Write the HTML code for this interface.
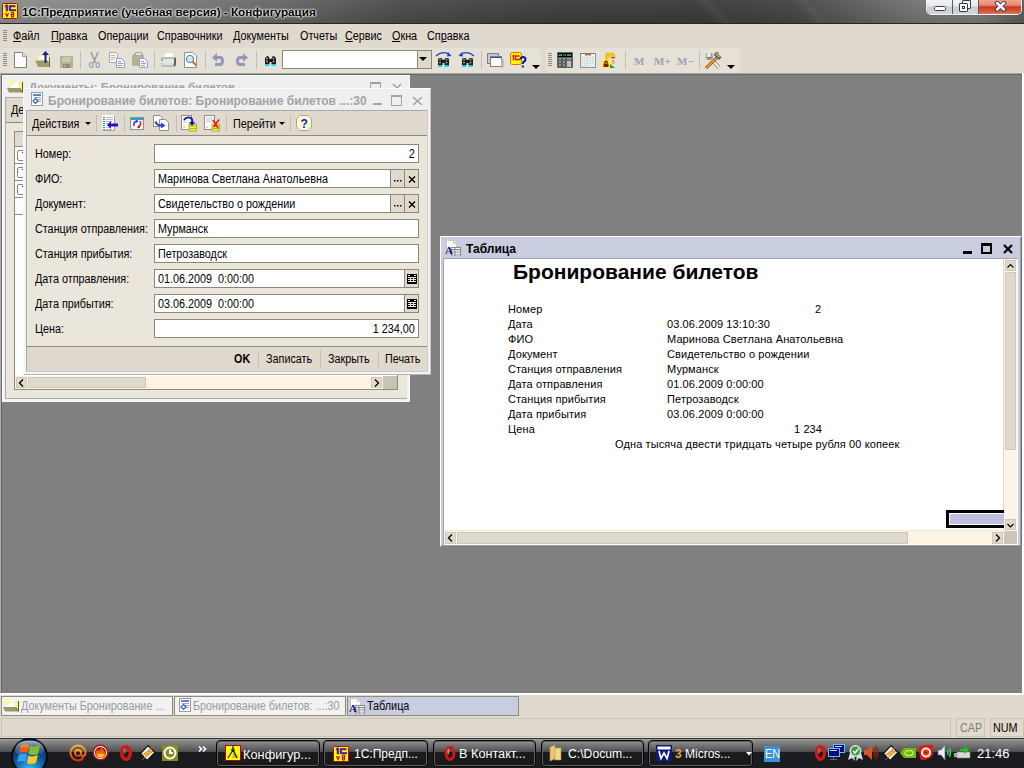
<!DOCTYPE html>
<html><head><meta charset="utf-8">
<style>
*{box-sizing:border-box;margin:0;padding:0}
html,body{width:1024px;height:768px;overflow:hidden}
body{position:relative;background:#808080;font-family:"Liberation Sans",sans-serif;font-size:11px;color:#000}
.a{position:absolute}
.t{position:absolute;white-space:nowrap;line-height:13px}
.r{position:absolute;white-space:nowrap;line-height:13px;font-size:11px;letter-spacing:.11px}
.u{position:absolute;white-space:nowrap;line-height:14px;font-size:12px;transform:scaleX(.9);transform-origin:0 0}
svg{position:absolute;overflow:visible}
#title{left:0;top:0;width:1024px;height:24px;background:linear-gradient(47.5deg,transparent 528px,rgba(255,255,255,.055) 535px,transparent 542px,transparent 600px,rgba(255,255,255,.045) 607px,transparent 614px),linear-gradient(rgba(255,255,255,.04),rgba(0,0,0,.1)),linear-gradient(90deg,#8e8e8e 0px,#858585 120px,#6c6c6c 260px,#4c4c4c 400px,#3e3e3e 560px,#3c3c3c 700px,#454545 790px,#606060 860px,#767676 920px,#7c7c7c 980px,#5c5c5c 1024px);border-bottom:1px solid #262626}
#menu{left:0;top:24px;width:1024px;height:49px;background:#e0d9ce}
#mdi{left:0;top:73px;width:1022px;height:620px;background:#808080;border-top:1px solid #a8a8a8;border-left:1px solid #b0b0b0;box-shadow:inset 1px 1px 0 #686868}
#tabs{left:0;top:694px;width:1024px;height:24px;background:#e0d9ce;border-top:1px solid #fff}
#status{left:0;top:718px;width:1024px;height:20px;background:#e0d9ce}
#task{left:0;top:738px;width:1024px;height:30px;background:linear-gradient(#777 0px,#555 2px,#454545 8px,#333 13px,#161616 14px,#1a1a1a 30px)}
.grip{position:absolute;width:4px;background:repeating-linear-gradient(#8f8b80 0 1px,transparent 1px 2px)}
.tb{position:absolute;top:48px;height:25px;background:#e5e1d7;border-radius:3px}
.sep{position:absolute;width:1px;background:#c4bfb3}
.field{position:absolute;background:#fff;border:1px solid #8c8878;height:19px}
.btn3{position:absolute;background:#e0d9ce;border:1px solid #8c8878;height:19px;width:15px}
</style></head><body>
<!-- TITLE BAR -->
<div id="title" class="a"></div>
<svg style="left:2px;top:3px" width="16" height="16"><rect x="0.5" y="0.5" width="15" height="15" rx="1" fill="#ffff00" stroke="#c00000"/><path d="M3 3.5L4.5 2.5V8" stroke="#e00000" stroke-width="1.6" fill="none" transform="translate(0.6,0.4)"/><path d="M3 3.5L4.5 2.5V8" stroke="#1f2fe0" stroke-width="1.6" fill="none"/><path d="M13 3H7.5V7H13.5" stroke="#e00000" stroke-width="1.6" fill="none" transform="translate(0.6,0.4)"/><path d="M13 3H7.5V7H13.5" stroke="#1f2fe0" stroke-width="1.6" fill="none"/><path d="M3.5 10L5 13.5L6.5 10" stroke="#b00000" stroke-width="1.2" fill="none"/><circle cx="10.5" cy="10.3" r="1.3" fill="none" stroke="#b00000" stroke-width="1.1"/><circle cx="10.5" cy="12.8" r="1.3" fill="none" stroke="#b00000" stroke-width="1.1"/></svg>
<div class="t" style="left:22px;top:5px;font-weight:bold;font-size:11.7px;line-height:14px;color:#000;text-shadow:0 0 2px #fff,0 0 2px #fff,0 0 3px #eee">1С:Предприятие (учебная версия) - Конфигурация</div>
<!-- caption buttons -->
<div class="a" style="left:926px;top:-3px;width:96px;height:18px;border:1px solid #f2f2f2;border-top:none;border-radius:0 0 5px 5px;background:#5a5a5a;box-shadow:0 0 1px rgba(0,0,0,.4)"></div>
<div class="a" style="left:927px;top:-2px;width:25px;height:16px;background:linear-gradient(#f6f6f6,#e8e8e8 50%,#c8cad2 56%,#d4d6de);border-radius:0 0 0 4px"></div>
<div class="a" style="left:953px;top:-2px;width:25px;height:16px;background:linear-gradient(#f6f6f6,#e8e8e8 50%,#c8cad2 56%,#d4d6de)"></div>
<div class="a" style="left:979px;top:-2px;width:42px;height:16px;background:linear-gradient(#f0b0a0,#e88870 45%,#c83c20 56%,#d85a3a 85%,#e07a5a);border-radius:0 0 4px 0"></div>
<div class="a" style="left:934px;top:6px;width:12px;height:5px;border:1px solid #353a58;border-radius:1.5px;background:#fff"></div>
<div class="a" style="left:962px;top:0px;width:9px;height:9px;border:1px solid #353a58;border-radius:1px;background:#fff"></div>
<div class="a" style="left:959px;top:3px;width:9px;height:9px;border:1px solid #353a58;border-radius:1px;background:#fff"></div>
<div class="a" style="left:962px;top:6px;width:3px;height:3px;border:1px solid #353a58"></div>
<svg style="left:994px;top:1px" width="13" height="11"><path d="M3 2L10 8.5M10 2L3 8.5" stroke="#353a58" stroke-width="4.4" stroke-linecap="round"/><path d="M3 2L10 8.5M10 2L3 8.5" stroke="#fff" stroke-width="2.4" stroke-linecap="round"/></svg>
<!-- MENU -->
<div id="menu" class="a"></div>
<div class="grip" style="left:3px;top:30px;height:11px"></div>
<div class="u" style="left:13px;top:29px;"><u>Ф</u>айл</div>
<div class="u" style="left:51px;top:29px;"><u>П</u>равка</div>
<div class="u" style="left:98px;top:29px;">Операции</div>
<div class="u" style="left:157px;top:29px;">Справочники</div>
<div class="u" style="left:233px;top:29px;">Документы</div>
<div class="u" style="left:300px;top:29px;">Отчеты</div>
<div class="u" style="left:345px;top:29px;"><u>С</u>ервис</div>
<div class="u" style="left:392px;top:29px;"><u>О</u>кна</div>
<div class="u" style="left:427px;top:29px;">Сп<u>р</u>авка</div>

<!-- TOOLBARS -->
<div class="tb" style="left:0;width:541px"></div>
<div class="tb" style="left:546px;width:194px"></div>
<div class="grip" style="left:3px;top:53px;height:13px"></div>
<div class="grip" style="left:548px;top:53px;height:13px"></div>
<div id="tbicons">
<svg style="left:14px;top:52px" width="13" height="16"><path d="M0.5 0.5H8.5L12.5 4.5V15.5H0.5Z" fill="#fff" stroke="#808080"/><path d="M8.5 0.5V4.5H12.5" fill="#e0e0e0" stroke="#a0a0a0"/></svg>
<svg style="left:35px;top:51px" width="17" height="17"><path d="M2 6L5 3L9 7Z" fill="#fdf890"/><path d="M3 8L7 5H12V9Z" fill="#fff"/><path d="M12 6H15V16L13 14Z" fill="#f8f098"/><path d="M0 9H13L15 16H3Z" fill="#a09c6c"/><path d="M0 9H13" stroke="#f8f4c0"/><path d="M14.5 6V16" stroke="#6c6838"/><path d="M10.5 12V3" stroke="#1a1a8a" stroke-width="2"/><path d="M7 4L10.5 0L14 4Z" fill="#1a1a8a"/></svg>
<svg style="left:60px;top:56px" width="13" height="12"><rect x="0" y="0" width="13" height="12" fill="#b4b294"/><rect x="2" y="1" width="9" height="5" fill="#cac8ae"/><rect x="3" y="8" width="7" height="4" fill="#8e8c78"/><rect x="4" y="9" width="2" height="2" fill="#b4b294"/></svg>
<div class="sep" style="left:80px;top:51px;height:18px"></div>
<svg style="left:89px;top:52px" width="11" height="16"><path d="M2 0L6.5 11M9 0L4.5 11" stroke="#a0a0a0" stroke-width="1.6"/><ellipse cx="2.2" cy="13" rx="1.7" ry="2.5" fill="none" stroke="#9a9ec4" stroke-width="1.2"/><ellipse cx="8.8" cy="13" rx="1.7" ry="2.5" fill="none" stroke="#9a9ec4" stroke-width="1.2"/></svg>
<svg style="left:109px;top:52px" width="16" height="16"><path d="M0.5 0.5H6.5L8.5 2.5V10.5H0.5Z" fill="#f8f8f8" stroke="#a8a8a8"/><path d="M2 3.5H6M2 5.5H7M2 7.5H5" stroke="#b8b8b8"/><path d="M7.5 6.5H12.5L15.5 9.5V15.5H7.5Z" fill="#f4f4f8" stroke="#9a9ec4"/><path d="M9 9.5H12M9 11.5H14M9 13.5H13" stroke="#9a9ec4"/></svg>
<svg style="left:132px;top:52px" width="16" height="16"><rect x="0" y="2" width="12" height="12" rx="2" fill="#b4b294"/><rect x="3.5" y="0.5" width="6" height="3" fill="#e4e4e4" stroke="#a8a8a8"/><path d="M7.5 6.5H12.5L15.5 9.5V15.5H7.5Z" fill="#f4f4f8" stroke="#9a9ec4"/><path d="M9 9.5H12M9 11.5H14M9 13.5H13" stroke="#9a9ec4"/></svg>
<div class="sep" style="left:154px;top:51px;height:18px"></div>
<svg style="left:160px;top:53px" width="17" height="15"><path d="M5 0H14L12 5H3Z" fill="#fff" stroke="#ddd" stroke-width="0.6"/><path d="M1 6Q1 4 3 4H14L16 6V12L14 14H2L1 12Z" fill="#bcbcbc"/><path d="M1 6H14V10H1Z" fill="#e4e4e4"/><path d="M14 6L16 4V12L14 14Z" fill="#606060"/><path d="M2 11H13" stroke="#fff"/><circle cx="2" cy="7" r="0.9" fill="#20d020"/></svg>
<svg style="left:184px;top:52px" width="14" height="16"><path d="M0.5 0.5H9L12.5 4V15.5H0.5Z" fill="#fff" stroke="#909090"/><circle cx="6" cy="7" r="3.6" fill="#c8f0f8" stroke="#507888" stroke-width="1"/><path d="M8.5 9.5L12.5 13.5" stroke="#c87020" stroke-width="2"/></svg>
<div class="sep" style="left:205px;top:51px;height:18px"></div>
<svg style="left:212px;top:53px" width="13" height="14"><path d="M0 4.5L5 0V3H8Q12 3 12 8Q12 13 8 13H3V10H8Q9 10 9 8Q9 6 8 6H5V9Z" fill="#9498bc"/></svg>
<svg style="left:236px;top:53px" width="13" height="14"><path d="M12 4.5L7 0V3H4Q0 3 0 8Q0 13 4 13H9V10H4Q3 10 3 8Q3 6 4 6H7V9Z" fill="#9498bc"/></svg>
<div class="sep" style="left:256px;top:51px;height:18px"></div>
<svg style="left:265px;top:56px" width="12" height="10"><path d="M1 2Q1 0 2.5 0Q4 0 4 2V8H0V3ZM7 2Q7 0 8.5 0Q10 0 10 2V8H11V3Z" fill="#1a1a1a"/><rect x="0" y="1" width="4.5" height="8" rx="1.5" fill="#1a1a1a"/><rect x="6.5" y="1" width="4.5" height="8" rx="1.5" fill="#1a1a1a"/><rect x="4" y="3" width="3" height="3" fill="#1a1a1a"/><circle cx="2" cy="2.5" r="1" fill="#a0a0a0"/><circle cx="2" cy="5.5" r="1" fill="#a0a0a0"/><circle cx="8.5" cy="2.5" r="1" fill="#a0a0a0"/><circle cx="8.5" cy="5.5" r="1" fill="#a0a0a0"/><rect x="0" y="8" width="4" height="2" fill="#10d8e8"/><rect x="6.5" y="8" width="4" height="2" fill="#10d8e8"/></svg>
<svg style="left:435px;top:51px" width="18" height="16"><path d="M1 5Q8 -1 15 4" stroke="#2040c0" stroke-width="1.2" fill="none"/><path d="M13 1L16.5 5L12 5.5Z" fill="#2040c0"/><g transform="translate(3,6)"><rect x="0" y="1" width="4.5" height="8" rx="1.5" fill="#1a1a1a"/><rect x="6.5" y="1" width="4.5" height="8" rx="1.5" fill="#1a1a1a"/><rect x="4" y="3" width="3" height="3" fill="#1a1a1a"/><circle cx="2" cy="2.5" r="1" fill="#a0a0a0"/><circle cx="2" cy="5.5" r="1" fill="#a0a0a0"/><circle cx="8.5" cy="2.5" r="1" fill="#a0a0a0"/><circle cx="8.5" cy="5.5" r="1" fill="#a0a0a0"/><rect x="0" y="8" width="4" height="2" fill="#10d8e8"/><rect x="6.5" y="8" width="4" height="2" fill="#10d8e8"/></g></svg>
<svg style="left:458px;top:51px" width="18" height="16"><path d="M16 5Q9 -1 2 4" stroke="#2040c0" stroke-width="1.2" fill="none"/><path d="M4 1L0.5 5L5 5.5Z" fill="#2040c0"/><g transform="translate(4,6)"><rect x="0" y="1" width="4.5" height="8" rx="1.5" fill="#1a1a1a"/><rect x="6.5" y="1" width="4.5" height="8" rx="1.5" fill="#1a1a1a"/><rect x="4" y="3" width="3" height="3" fill="#1a1a1a"/><circle cx="2" cy="2.5" r="1" fill="#a0a0a0"/><circle cx="2" cy="5.5" r="1" fill="#a0a0a0"/><circle cx="8.5" cy="2.5" r="1" fill="#a0a0a0"/><circle cx="8.5" cy="5.5" r="1" fill="#a0a0a0"/><rect x="0" y="8" width="4" height="2" fill="#10d8e8"/><rect x="6.5" y="8" width="4" height="2" fill="#10d8e8"/></g></svg>
<div class="sep" style="left:481px;top:51px;height:18px"></div>
<svg style="left:487px;top:53px" width="17" height="15"><rect x="0.5" y="0.5" width="11" height="10" fill="#c8c8c8" stroke="#808080"/><rect x="3.5" y="3.5" width="11" height="10" fill="#fff" stroke="#808080"/><path d="M4 4.5H14" stroke="#3050c0" stroke-width="1.2"/><rect x="14" y="6" width="2.5" height="8.5" fill="#b0b0b0"/></svg>
<svg style="left:510px;top:52px" width="17" height="17"><rect x="0.5" y="0.5" width="11" height="12" rx="2" fill="#ffff00" stroke="#e07000"/><path d="M2.5 4.5L3.5 3.5V8.5M9.5 4H5.5V7.5H10" stroke="#f00000" stroke-width="1.3" fill="none"/><path d="M10.5 7.5Q10.5 5 13 5Q15.5 5 15.5 7.5Q15.5 9 13.5 10Q12.8 10.5 12.8 12" stroke="#0818a8" stroke-width="2" fill="none"/><rect x="11.8" y="13.5" width="2" height="2" fill="#0818a8"/></svg>
<svg style="left:532px;top:65px" width="8" height="4"><path d="M0 0H8L4 4Z" fill="#000"/></svg>
<svg style="left:557px;top:52px" width="16" height="16"><rect x="0" y="0" width="16" height="16" rx="1" fill="#606060"/><rect x="1" y="1" width="14" height="4" fill="#000"/><path d="M2 3H5M6 3H9M10 3H14" stroke="#20e040"/><path d="M2 2.5V4M4 2.5V4M11 2.5V4M13 2.5V4" stroke="#20e0e0"/><path d="M2 7H4M6 7H8M10 7H14M2 10H4M6 10H8M2 13H4M6 13H8" stroke="#a0a0a0" stroke-width="1.5"/><rect x="10" y="9" width="4" height="6" fill="#c0c0c0"/></svg>
<svg style="left:580px;top:52px" width="16" height="16"><rect x="0.5" y="1.5" width="15" height="14" fill="#fff" stroke="#909090"/><path d="M1 1.5H15" stroke="#606060" stroke-dasharray="1 1"/><path d="M5 3Q8 2 11 3" stroke="#e06020" stroke-width="1.5"/><rect x="1" y="4" width="14" height="11" fill="#d8f4fa"/><path d="M2 6H14M2 8.5H14M2 11H14M2 13.5H10" stroke="#f0a070" stroke-dasharray="1 1.5"/></svg>
<svg style="left:602px;top:52px" width="15" height="17"><path d="M5 3Q6 8 9 11Q12 12 13.5 10V5Q12 2 9 3Z" fill="#fbe0c8"/><path d="M10 7Q13 8 13 11Q11 12 9.5 11Z" fill="#f0a0a8"/><path d="M3 6Q2 1 7 0.5Q12 0 13.5 3Q14 6 12 6Q10 4 8 5Q6 8 5 9Z" fill="#f8c428"/><path d="M4 2L6 1M10 1L12 2" stroke="#a0c040" stroke-width="1"/><path d="M9 6Q11 5 13 6" stroke="#804020" stroke-width="1"/><path d="M8 12L13 16H8Z" fill="#10a040"/><rect x="0" y="8" width="8" height="8" fill="#ffff00"/><path d="M1.5 11.5H6.5V15H1.5Z" fill="#8a1030"/><path d="M2.8 11.5V10Q4 8.5 5.2 10V11.5" stroke="#8a1030" stroke-width="1.3" fill="none"/></svg>
<div class="sep" style="left:625px;top:51px;height:18px"></div>
<div class="t" style="left:634px;top:54px;font:bold 11px 'Liberation Serif';color:#9c9eb8;line-height:14px">M</div>
<div class="t" style="left:654px;top:54px;font:bold 11px 'Liberation Serif';color:#9c9eb8;line-height:14px">M+</div>
<div class="t" style="left:677px;top:54px;font:bold 11px 'Liberation Serif';color:#9c9eb8;line-height:14px">M−</div>
<div class="sep" style="left:699px;top:51px;height:18px"></div>
<svg style="left:705px;top:52px" width="17" height="17"><path d="M7.5 8.5L14 15.5" stroke="#707070" stroke-width="3.6"/><path d="M7.5 8.5L14 15.5" stroke="#f4f4f4" stroke-width="2.2"/><circle cx="4.2" cy="4.5" r="3.8" fill="#9a9a9a"/><circle cx="3.6" cy="4" r="2.2" fill="#e8e8e8"/><rect x="3" y="0" width="2.4" height="4" fill="#f0f0f0"/><path d="M2.5 5.5H5.5" stroke="#555" stroke-width="1"/><path d="M12 5.5L1 16" stroke="#7a2010" stroke-width="3"/><path d="M12 5.5L1 16" stroke="#e8a020" stroke-width="1.8"/><path d="M8.5 2.5L11 0L16.5 5.5L14 8Z" fill="#5a5a5a"/><path d="M10 2L11 1L15 5L14 6Z" fill="#b0b0b0"/><path d="M11 0.5L13 0L13.5 1.5" stroke="#e8a020" stroke-width="1"/></svg>
<svg style="left:727px;top:65px" width="8" height="4"><path d="M0 0H8L4 4Z" fill="#000"/></svg>

</div>
<!-- combo -->
<div class="a" style="left:282px;top:50px;width:150px;height:19px;background:#fff;border:1px solid #8c8878"></div>
<div class="a" style="left:417px;top:51px;width:14px;height:17px;background:#e0d9ce;border-left:1px solid #8c8878"></div>
<svg style="left:419px;top:57px" width="8" height="5"><path d="M0 0 H8 L4 4Z" fill="#000"/></svg>

<!-- MDI -->
<div id="mdi" class="a"></div>
<div class="a" style="left:1022px;top:73px;width:2px;height:621px;background:#fff"></div>

<!-- DOC LIST WINDOW -->
<div id="docwin">
<div class="a" style="left:2px;top:75px;width:408px;height:327px;background:#f2f2f2;border:1px solid #fff;border-right-color:#f6f6f6;border-bottom-color:#f6f6f6"></div>
<div class="a" style="left:5px;top:123px;width:402px;height:276px;background:#ebe6dc"></div>
<div class="a" style="left:3px;top:76px;width:406px;height:21px;background:#efefef"></div>
<svg style="left:7px;top:80px" width="17" height="14"><path d="M2 0H6L8 2L2 7Z" fill="#fdfc98"/><path d="M1 8L8 2H11L14 5V8Z" fill="#fff"/><path d="M1 8L8 2.5M11 2.5L13 4.5" stroke="#c8c8c8" stroke-width=".8" stroke-dasharray="1 1"/><path d="M11 2H15V12L13 9Z" fill="#f8f088"/><path d="M0 8H13L15 12.5H2Z" fill="#9c9868"/><path d="M15.5 2V12.5" stroke="#5a5830"/><path d="M13 8.5L15 12" stroke="#6a6838"/></svg>
<div class="t" style="left:29px;top:80px;font-weight:bold;font-size:11.5px;line-height:14px;color:#a3a3a3">Документы: Бронирование билетов</div>
<div class="a" style="left:370px;top:82px;width:11px;height:11px;border:1px solid #a3a3a3;border-top-width:2px"></div>
<svg style="left:392px;top:83px" width="10" height="10"><path d="M1 1L9 9M9 1L1 9" stroke="#a3a3a3" stroke-width="1.6"/></svg>
<div class="a" style="left:5px;top:97px;width:402px;height:26px;background:#e0d9ce;border-top:1px solid #a9a9a9;border-left:1px solid #a9a9a9;border-bottom:1px solid #8f8a7d"></div>
<div class="u" style="left:11px;top:103px">Действия</div>
<div class="a" style="left:5px;top:123px;width:402px;height:276px;border-left:1px solid #a9a9a9;border-bottom:1px solid #a9a9a9"></div>
<div class="a" style="left:14px;top:131px;width:384px;height:259px;background:#fff;border:1px solid #8f8a7d"></div>
<div class="a" style="left:15px;top:132px;width:383px;height:15px;background:#e0d9ce;border-bottom:1px solid #8f8a7d"></div>
<div class="a" style="left:15px;top:163px;width:383px;height:1px;background:#8f8a7d"></div>
<div class="a" style="left:15px;top:180px;width:383px;height:1px;background:#8f8a7d"></div>
<div class="a" style="left:15px;top:197px;width:383px;height:1px;background:#8f8a7d"></div>
<div class="a" style="left:15px;top:214px;width:383px;height:1px;background:#8f8a7d"></div>
<div class="a" style="left:17px;top:150px;width:8px;height:11px;border:1px solid #808080;border-radius:2px;background:#fff"></div>
<div class="a" style="left:22px;top:152px;width:1px;height:1px;background:#1030e0"></div>
<div class="a" style="left:17px;top:167px;width:8px;height:11px;border:1px solid #808080;border-radius:2px;background:#fff"></div>
<div class="a" style="left:22px;top:169px;width:1px;height:1px;background:#1030e0"></div>
<div class="a" style="left:17px;top:184px;width:8px;height:11px;border:1px solid #808080;border-radius:2px;background:#fff"></div>
<div class="a" style="left:22px;top:186px;width:1px;height:1px;background:#1030e0"></div>
<div class="a" style="left:15px;top:376px;width:382px;height:13px;background:#fcf3e4"></div>
<div class="a" style="left:16px;top:377px;width:11px;height:11px;background:#e0d9ce;border:1px solid #cfc8ba"></div>
<svg style="left:18px;top:379px" width="6" height="8"><path d="M5 0.5L1.5 4L5 7.5" fill="none" stroke="#000" stroke-width="1.3"/></svg>
<div class="a" style="left:28px;top:377px;width:118px;height:11px;background:#e0d9ce;border:1px solid #cfc8ba"></div>
<div class="a" style="left:371px;top:377px;width:11px;height:11px;background:#e0d9ce;border:1px solid #cfc8ba"></div>
<svg style="left:374px;top:379px" width="6" height="8"><path d="M1 0.5L4.5 4L1 7.5" fill="none" stroke="#000" stroke-width="1.3"/></svg>
<div class="a" style="left:383px;top:376px;width:14px;height:13px;background:#c9c3b6"></div>
</div>

<!-- FORM WINDOW -->
<div id="formwin">
<div class="a" style="left:23px;top:88px;width:408px;height:287px;background:#f4f4f4;border:1px solid #fbfbfb;border-right-color:#c8c8c8;border-bottom-color:#b4b4b4"></div>
<div class="a" style="left:24px;top:89px;width:406px;height:21px;background:#efefef"></div>
<svg style="left:31px;top:92px" width="12" height="14"><rect x="0.5" y="0.5" width="11" height="13" fill="#fff" stroke="#9a9a9a"/><path d="M2 3H10" stroke="#2f5fa5" stroke-width="1.5"/><path d="M3 5.5H10M6 7.5H10M7 9.5H10" stroke="#9aa0e0"/><path d="M4.5 6.5L7 9L4.5 11.5L2 9Z" fill="none" stroke="#3060b0" stroke-width="1.2"/></svg>
<div class="t" style="left:48px;top:94px;font-weight:bold;font-size:12px;line-height:14px;color:#a3a3a3">Бронирование билетов: Бронирование билетов ...:30</div>
<div class="a" style="left:373px;top:103px;width:9px;height:2px;background:#a3a3a3"></div>
<div class="a" style="left:391px;top:95px;width:11px;height:11px;border:1px solid #a3a3a3;border-top-width:2px"></div>
<svg style="left:412px;top:96px" width="11" height="10"><path d="M1 1L10 9M10 1L1 9" stroke="#a3a3a3" stroke-width="1.6"/></svg>
<div class="a" style="left:26px;top:110px;width:401px;height:26px;background:#e0d9ce;border-top:1px solid #a9a9a9;border-left:1px solid #a9a9a9;border-bottom:1px solid #8f8a7d"></div>
<div class="a" style="left:26px;top:136px;width:401px;height:210px;background:#ebe6dc;border-left:1px solid #a9a9a9"></div>
<div class="a" style="left:26px;top:346px;width:401px;height:25px;background:#e0d9ce;border-top:1px solid #8f8a7d;border-left:1px solid #a9a9a9"></div>

<div class="a" style="left:427px;top:110px;width:1px;height:262px;background:#cacaca"></div>
<div class="a" style="left:26px;top:371px;width:402px;height:1px;background:#cacaca"></div>
<div class="u" style="left:32px;top:117px">Действия</div>
<svg style="left:85px;top:122px" width="6" height="3"><path d="M0 0H6L3 3Z" fill="#000"/></svg>
<div class="u" style="left:233px;top:117px">Перейти</div>
<svg style="left:102px;top:115px" width="17" height="16"><rect x="1" y="1" width="12" height="15" fill="#a0a0a0"/><rect x="0" y="0" width="12" height="15" fill="#fff"/><path d="M1 2h2v1h-2zM1 4h2v1h-2zM1 6h2v1h-2zM1 8h2v1h-2zM1 10h2v1h-2zM1 12h2v1h-2zM1 14h2v1h-2z" fill="#2090e0"/><path d="M4 2.5H11M4 4.5H11M4 6.5H10M4 8.5H7M4 12.5H7M4 14.5H10" stroke="#c0c0c0"/><path d="M5 10L9 6V8.5H16V11.5H9V14Z" fill="#2a10c8"/></svg>
<svg style="left:130px;top:117px" width="15" height="13"><rect x="0.5" y="0.5" width="13" height="12" fill="#f4f4f4" stroke="#909090"/><rect x="1" y="1" width="13" height="2" fill="#3098d8"/><rect x="0" y="0" width="2" height="2" fill="#20e020"/><path d="M4 9Q3 5 7 4" stroke="#1030e0" stroke-width="1.4" fill="none"/><path d="M6 3L8.5 4L6.5 6Z" fill="#1030e0"/><path d="M10 4Q12 8 8 10" stroke="#e02020" stroke-width="1.4" fill="none"/><path d="M9 8.5L7 10.5L10 11Z" fill="#a00000"/></svg>
<svg style="left:153px;top:115px" width="16" height="16"><path d="M0.5 0.5H7L9 2.5V11.5H0.5Z" fill="#fff" stroke="#909090"/><path d="M6.5 4.5H12.5L15.5 7.5V15.5H6.5Z" fill="#fff" stroke="#909090"/><path d="M2.5 6.5Q4 11 9 10.5" stroke="#3040d0" stroke-width="2.2" fill="none"/><path d="M8 7.5L12.5 10.5L8 13.5Z" fill="#3040d0"/></svg>
<svg style="left:181px;top:115px" width="17" height="17"><rect x="0.5" y="0.5" width="10" height="14" fill="#fff" stroke="#909090"/><path d="M2 3H7M2 5H5M2 7H6" stroke="#c8c8c8"/><path d="M3 11L4 12.5H2Z" fill="#9090f0"/><path d="M8 9H15.5V16H8Z" fill="#f8f040" stroke="#a0a020" stroke-width="0.8"/><path d="M8.5 11H15M8.5 13.5H15" stroke="#a0a020" stroke-width="0.8"/><path d="M3 5Q6 1 10 3Q12 5 11 8" stroke="#0818a8" stroke-width="1.8" fill="none"/><path d="M8 7H14L11 11Z" fill="#0818a8"/></svg>
<svg style="left:204px;top:115px" width="17" height="17"><rect x="0.5" y="0.5" width="10" height="14" fill="#fff" stroke="#909090"/><path d="M2 3H9M2 5H9M2 7H9" stroke="#c8c8c8"/><path d="M3 11L4 12.5H2Z" fill="#9090f0"/><path d="M8 9H15.5V16H8Z" fill="#f8f040" stroke="#a0a020" stroke-width="0.8"/><path d="M8.5 11H15M8.5 13.5H15" stroke="#a0a020" stroke-width="0.8"/><path d="M9 5L14 13M15 4.5L9.5 12" stroke="#f01010" stroke-width="1.5"/></svg>
<svg style="left:296px;top:115px" width="16" height="16"><path d="M4 0.5H12L15.5 4V12L12 15.5H4L0.5 12V4Z" fill="#fdfbd0" stroke="#a8a8a0"/><text x="4.5" y="13" font-family="Liberation Sans" font-weight="bold" font-size="12" fill="#0818b8">?</text></svg>

<svg style="left:279px;top:122px" width="6" height="3"><path d="M0 0H6L3 3Z" fill="#000"/></svg>
<div class="sep" style="left:96px;top:115px;height:17px"></div>
<div class="sep" style="left:124px;top:115px;height:17px"></div>
<div class="sep" style="left:176px;top:115px;height:17px"></div>
<div class="sep" style="left:226px;top:115px;height:17px"></div>
<div class="sep" style="left:290px;top:115px;height:17px"></div>
<div class="u" style="left:35px;top:147px">Номер:</div>
<div class="field" style="left:154px;top:144px;width:265px"></div>
<div class="u" style="transform-origin:100% 0;right:609px;top:147px">2</div>
<div class="u" style="left:35px;top:172px">ФИО:</div>
<div class="field" style="left:154px;top:169px;width:237px"></div>
<div class="btn3" style="left:390px;top:169px"></div><div class="btn3" style="left:404px;top:169px"></div>
<div class="u" style="left:158px;top:172px">Маринова Светлана Анатольевна</div>
<svg style="left:394px;top:180px" width="8" height="2"><path d="M0 0h1.5v1.5h-1.5zM3 0h1.5v1.5h-1.5zM6 0h1.5v1.5h-1.5z" fill="#000"/></svg>
<svg style="left:408px;top:176px" width="8" height="7"><path d="M1 0.5L7 6.5M7 0.5L1 6.5" stroke="#000" stroke-width="1.4"/></svg>
<div class="u" style="left:35px;top:197px">Документ:</div>
<div class="field" style="left:154px;top:194px;width:237px"></div>
<div class="btn3" style="left:390px;top:194px"></div><div class="btn3" style="left:404px;top:194px"></div>
<div class="u" style="left:158px;top:197px">Свидетельство о рождении</div>
<svg style="left:394px;top:205px" width="8" height="2"><path d="M0 0h1.5v1.5h-1.5zM3 0h1.5v1.5h-1.5zM6 0h1.5v1.5h-1.5z" fill="#000"/></svg>
<svg style="left:408px;top:201px" width="8" height="7"><path d="M1 0.5L7 6.5M7 0.5L1 6.5" stroke="#000" stroke-width="1.4"/></svg>
<div class="u" style="left:35px;top:222px">Станция отправления:</div>
<div class="field" style="left:154px;top:219px;width:265px"></div>
<div class="u" style="left:158px;top:222px">Мурманск</div>
<div class="u" style="left:35px;top:247px">Станция прибытия:</div>
<div class="field" style="left:154px;top:244px;width:265px"></div>
<div class="u" style="left:158px;top:247px">Петрозаводск</div>
<div class="u" style="left:35px;top:272px">Дата отправления:</div>
<div class="field" style="left:154px;top:269px;width:251px"></div>
<div class="btn3" style="left:404px;top:269px"></div>
<div class="u" style="left:158px;top:272px">01.06.2009&nbsp; 0:00:00</div>
<svg style="left:407px;top:274px" width="10" height="10"><rect x="0" y="0" width="10" height="10" fill="#000"/><path d="M1 1h2v1h-2zM7 1h2v1h-2zM1 3h8v1h-8zM1 5h8v1h-8zM1 7h8v1h-8zM3 4h1v4h-1zM6 4h1v4h-1z" fill="#ece6da"/></svg>
<div class="u" style="left:35px;top:297px">Дата прибытия:</div>
<div class="field" style="left:154px;top:294px;width:251px"></div>
<div class="btn3" style="left:404px;top:294px"></div>
<div class="u" style="left:158px;top:297px">03.06.2009&nbsp; 0:00:00</div>
<svg style="left:407px;top:299px" width="10" height="10"><rect x="0" y="0" width="10" height="10" fill="#000"/><path d="M1 1h2v1h-2zM7 1h2v1h-2zM1 3h8v1h-8zM1 5h8v1h-8zM1 7h8v1h-8zM3 4h1v4h-1zM6 4h1v4h-1z" fill="#ece6da"/></svg>
<div class="u" style="left:35px;top:322px">Цена:</div>
<div class="field" style="left:154px;top:319px;width:265px"></div>
<div class="u" style="transform-origin:100% 0;right:609px;top:322px">1 234,00</div>
<div class="u" style="left:234px;top:352px;font-weight:bold">OK</div>
<div class="u" style="left:266px;top:352px">Записать</div>
<div class="u" style="left:328px;top:352px">Закрыть</div>
<div class="u" style="left:385px;top:352px">Печать</div>
<div class="sep" style="left:258px;top:350px;height:17px"></div>
<div class="sep" style="left:320px;top:350px;height:17px"></div>
<div class="sep" style="left:378px;top:350px;height:17px"></div>
</div>

<!-- REPORT WINDOW -->
<div id="repwin">
<div class="a" style="left:440px;top:236px;width:582px;height:311px;background:#c8cde0;border-top:1px solid #fff;border-left:1px solid #fff;border-right:1px solid #6c6e7a;border-bottom:1px solid #7a7c88;box-shadow:inset -1px -1px 0 #9a9eb0"></div>
<svg style="left:445px;top:240px" width="17" height="17"><path d="M1.5 0.5H8.5L11.5 3.5V12H1.5Z" fill="#fff" stroke="#c8c8c8"/><path d="M8.5 0.5V3.5H11.5" fill="#e8e8e8" stroke="#c8c8c8"/><rect x="6" y="7" width="10" height="9" fill="#8a8a8a"/><path d="M7 8.5H9.5M10.5 8.5H15M7 10.8H9.5M10.5 10.8H15M7 13.1H9.5M10.5 13.1H15M7 15H9.5M10.5 15H15" stroke="#fff" stroke-width="1.2"/><text x="0" y="14" font-family="Liberation Serif" font-weight="bold" font-size="11" fill="#10108a">A</text></svg>
<div class="t" style="left:466px;top:242px;font-weight:bold;font-size:12px;line-height:14px">Таблица</div>
<div class="a" style="left:963px;top:251px;width:9px;height:3px;background:#000"></div>
<div class="a" style="left:981px;top:243px;width:11px;height:11px;border:2px solid #000;border-top-width:3px;border-bottom-width:2px"></div>
<svg style="left:1003px;top:244px" width="10" height="10"><path d="M1 1L9 9M9 1L1 9" stroke="#000" stroke-width="2.2"/></svg>
<div class="a" style="left:443px;top:258px;width:575px;height:287px;background:#fff;border-top:1px solid #a0a3b5;border-left:1px solid #a0a3b5"></div>
<div class="a" style="left:1003px;top:259px;width:14px;height:272px;background:#fcf4e8;border-left:1px solid #ddd7cb"></div>
<div class="a" style="left:1005px;top:260px;width:11px;height:11px;background:#e0d9ce;border:1px solid #cfc8ba"></div>
<svg style="left:1007px;top:263px" width="8" height="6"><path d="M0.5 4.5L3.5 1.5L6.5 4.5" fill="none" stroke="#000" stroke-width="1.1"/></svg>
<div class="a" style="left:1005px;top:272px;width:11px;height:178px;background:#e0d9ce;border:1px solid #cfc8ba"></div>
<div class="a" style="left:1005px;top:519px;width:11px;height:11px;background:#e0d9ce;border:1px solid #cfc8ba"></div>
<svg style="left:1007px;top:523px" width="8" height="6"><path d="M0.5 1L3.5 4L6.5 1" fill="none" stroke="#000" stroke-width="1.1"/></svg>
<div class="a" style="left:444px;top:530px;width:560px;height:14px;background:#fcf3e4;border-top:1px solid #efe9dc"></div>
<div class="a" style="left:445px;top:532px;width:11px;height:12px;background:#e0d9ce;border:1px solid #cfc8ba"></div>
<svg style="left:447px;top:534px" width="6" height="8"><path d="M5 0.5L1.5 4L5 7.5" fill="none" stroke="#000" stroke-width="1.3"/></svg>
<div class="a" style="left:457px;top:532px;width:451px;height:12px;background:#e0d9ce;border:1px solid #cfc8ba"></div>
<div class="a" style="left:992px;top:532px;width:11px;height:12px;background:#e0d9ce;border:1px solid #cfc8ba"></div>
<svg style="left:995px;top:534px" width="6" height="8"><path d="M1 0.5L4.5 4L1 7.5" fill="none" stroke="#000" stroke-width="1.3"/></svg>
<div class="a" style="left:1004px;top:531px;width:13px;height:13px;background:#cdc6b8"></div>
<div class="a" style="left:946px;top:510px;width:58px;height:18px;border:3px solid #000;border-right:none;background:#bfbfdf;box-shadow:inset 1px 1px 0 #fff,inset 0 -1px 0 #fff"></div>
<div class="t" style="left:513px;top:260px;font-weight:bold;font-size:21px;line-height:24px">Бронирование билетов</div>

<div class="r" style="left:508px;top:303px">Номер</div>
<div class="r" style="left:508px;top:318px">Дата</div>
<div class="r" style="left:667px;top:318px">03.06.2009 13:10:30</div>
<div class="r" style="left:508px;top:333px">ФИО</div>
<div class="r" style="left:667px;top:333px">Маринова Светлана Анатольевна</div>
<div class="r" style="left:508px;top:348px">Документ</div>
<div class="r" style="left:667px;top:348px">Свидетельство о рождении</div>
<div class="r" style="left:508px;top:363px">Станция отправления</div>
<div class="r" style="left:667px;top:363px">Мурманск</div>
<div class="r" style="left:508px;top:378px">Дата отправления</div>
<div class="r" style="left:667px;top:378px">01.06.2009 0:00:00</div>
<div class="r" style="left:508px;top:393px">Станция прибытия</div>
<div class="r" style="left:667px;top:393px">Петрозаводск</div>
<div class="r" style="left:508px;top:408px">Дата прибытия</div>
<div class="r" style="left:667px;top:408px">03.06.2009 0:00:00</div>
<div class="r" style="left:508px;top:423px">Цена</div>
<div class="r" style="left:815px;top:303px">2</div>
<div class="r" style="left:794px;top:423px">1 234</div>
<div class="r" style="left:615px;top:438px">Одна тысяча двести тридцать четыре рубля 00 копеек</div>
</div>

<!-- TABS -->
<div id="tabs" class="a"></div>
<div id="tabitems">
<div class="a" style="left:0;top:693px;width:1024px;height:2px;background:#fff"></div>
<div class="a" style="left:1px;top:696px;width:172px;height:20px;background:#f2f2f2;border:1px solid #8f8a7d"></div>
<svg style="left:3px;top:699px" width="17" height="14"><path d="M2 0H6L8 2L2 7Z" fill="#fdfc98"/><path d="M1 8L8 2H11L14 5V8Z" fill="#fff"/><path d="M1 8L8 2.5M11 2.5L13 4.5" stroke="#c8c8c8" stroke-width=".8" stroke-dasharray="1 1"/><path d="M11 2H15V12L13 9Z" fill="#f8f088"/><path d="M0 8H13L15 12.5H2Z" fill="#9c9868"/><path d="M15.5 2V12.5" stroke="#5a5830"/><path d="M13 8.5L15 12" stroke="#6a6838"/></svg>
<div class="u" style="left:21px;top:699px;color:#9a9a9a">Документы Бронирование ...</div>
<div class="a" style="left:174px;top:696px;width:172px;height:20px;background:#f2f2f2;border:1px solid #8f8a7d"></div>
<svg style="left:179px;top:698px" width="12" height="14"><rect x="0.5" y="0.5" width="11" height="13" fill="#fff" stroke="#9a9a9a"/><path d="M2 3H10" stroke="#2f5fa5" stroke-width="1.5"/><path d="M3 5.5H10M6 7.5H10M7 9.5H10" stroke="#9aa0e0"/><path d="M4.5 6.5L7 9L4.5 11.5L2 9Z" fill="none" stroke="#3060b0" stroke-width="1.2"/></svg>
<div class="u" style="left:193px;top:699px;color:#9a9a9a">Бронирование билетов: ...:30</div>
<div class="a" style="left:347px;top:696px;width:172px;height:20px;background:#c8cde0;border:1px solid #8f8a7d"></div>
<svg style="left:349px;top:698px" width="17" height="17"><path d="M1.5 0.5H8.5L11.5 3.5V12H1.5Z" fill="#fff" stroke="#c8c8c8"/><path d="M8.5 0.5V3.5H11.5" fill="#e8e8e8" stroke="#c8c8c8"/><rect x="6" y="7" width="10" height="9" fill="#8a8a8a"/><path d="M7 8.5H9.5M10.5 8.5H15M7 10.8H9.5M10.5 10.8H15M7 13.1H9.5M10.5 13.1H15M7 15H9.5M10.5 15H15" stroke="#fff" stroke-width="1.2"/><text x="0" y="14" font-family="Liberation Serif" font-weight="bold" font-size="11" fill="#10108a">A</text></svg>
<div class="u" style="left:367px;top:699px">Таблица</div>

</div>

<!-- STATUS -->
<div id="status" class="a"></div>
<div class="a" style="left:1px;top:718px;width:950px;height:19px;border:1px solid #cbc5b8"></div>
<div class="a" style="left:956px;top:718px;width:29px;height:19px;border:1px solid #cbc5b8"></div>
<div class="u" style="left:960px;top:721px;color:#808080;font-size:12px">CAP</div>
<div class="a" style="left:990px;top:718px;width:34px;height:19px;border:1px solid #cbc5b8"></div>
<div class="u" style="left:993px;top:721px;font-size:12px">NUM</div>

<!-- TASKBAR -->
<div id="task" class="a"></div>
<div id="taskitems">
<div class="a" style="left:0;top:738px;width:1024px;height:1px;background:#333"></div>
<div class="a" style="left:0;top:739px;width:1024px;height:13px;background:linear-gradient(#a0a0a0,#8a8a8a 15%,#6a6a6a 60%,#4e4e4e)"></div>
<div class="a" style="left:0;top:752px;width:1024px;height:16px;background:#1b1c1f"></div>
<!-- orb -->
<div class="a" style="left:11px;top:738px;width:37px;height:37px;border-radius:50%;background:#050a10"></div>
<div class="a" style="left:13px;top:740px;width:33px;height:33px;border-radius:50%;background:radial-gradient(circle at 50% 95%,#48d0f8 0%,#1a7ac0 30%,#0c4a88 55%,#103a68 75%,#6a9cc0 100%)"></div>
<div class="a" style="left:15px;top:741px;width:29px;height:13px;border-radius:15px 15px 6px 6px;background:linear-gradient(rgba(255,255,255,.5),rgba(255,255,255,.08))"></div>
<svg style="left:17px;top:743px" width="25" height="23"><path d="M4 2Q8 0 12 2L10.5 10Q7 8 2 10Z" fill="#f05a18"/><path d="M4 2Q8 0 12 2L11.5 5Q7 3.5 3.3 5.5Z" fill="#f8a040" opacity=".6"/><path d="M13 3Q17 5 23 2L21 11Q16 13 11.5 11Z" fill="#80c030"/><path d="M2 11.5Q6 9.5 10.3 11.5L9 19Q5 17 0 19Z" fill="#30a0f0"/><path d="M11.3 12.5Q15 14.5 20.8 12L19 20Q14 22 10 20Z" fill="#fcc828"/></svg>
<!-- quick launch -->
<svg style="left:69px;top:744px" width="18" height="18"><defs><linearGradient id="ag" x1="0" y1="0" x2="0" y2="1"><stop offset="0" stop-color="#f8b030"/><stop offset="1" stop-color="#e03010"/></linearGradient></defs><path d="M14.5 13.5Q12 16.5 9 16.5A7.5 7.5 0 1 1 16.5 9Q16.5 12 14 12Q12 12 12 9.5V6" fill="none" stroke="url(#ag)" stroke-width="2"/><circle cx="9" cy="9" r="3" fill="none" stroke="url(#ag)" stroke-width="2"/></svg>
<svg style="left:92px;top:744px" width="17" height="17"><circle cx="8.5" cy="8.5" r="8" fill="#b01818"/><circle cx="8.5" cy="8.5" r="6.5" fill="#fff"/><circle cx="8.5" cy="8.5" r="5.5" fill="#8a1010"/><path d="M3.5 10Q4 6 6 5Q6 7 7.5 7Q8 4 10 3Q10 6 12 6.5Q13.5 8.5 13.5 10.5Q12 14 8.5 14Q5 14 3.5 10Z" fill="#f06010"/><path d="M5 11Q6 9 8.5 10Q11 9 12 11Q11 13.5 8.5 13.5Q6 13.5 5 11Z" fill="#fcd030"/></svg>
<svg style="left:119px;top:745px" width="14" height="16"><ellipse cx="7" cy="8" rx="4.3" ry="6.3" fill="none" stroke="#d01818" stroke-width="3.4"/><ellipse cx="5.5" cy="6" rx="1" ry="3" fill="#f07070" opacity=".7"/></svg>
<svg style="left:140px;top:745px" width="15" height="16"><path d="M8 0.5L15 7.5L7 15.5L0.5 8.5Z" fill="#f4f4f4" stroke="#111" stroke-width="1.2"/><path d="M14 1L3 9.5H8L2 15L13 6.5H8.5Z" fill="#f8b020" stroke="#c06010" stroke-width=".5"/></svg>
<svg style="left:162px;top:745px" width="16" height="16"><rect x="0" y="0" width="16" height="16" fill="#8a8a1a"/><circle cx="8" cy="8" r="5.5" fill="none" stroke="#fff" stroke-width="2"/><path d="M8 4.5V8H11" stroke="#fff" stroke-width="2" fill="none"/></svg>
<svg style="left:198px;top:746px" width="10" height="6"><path d="M1 0.5L3.5 3L1 5.5M5 0.5L7.5 3L5 5.5" stroke="#fff" stroke-width="1.6" fill="none"/></svg>

<div class="a" style="left:216px;top:740px;width:104px;height:27px;border-radius:4px;border:1px solid #080808;box-shadow:inset 0 0 0 1px #5e5e5e,inset 0 1px 0 1px #8a8a8a;background:linear-gradient(#8e8e8e,#6a6a6a 25%,#4a4a4a 45%,#1c1c1c 46%,#181818)"></div>
<svg style="left:225px;top:745px" width="16" height="16"><rect x="0.5" y="0.5" width="15" height="15" fill="#ffff00" stroke="#c00000"/><path d="M9 5L14 13H7Z" fill="#c8c020"/><path d="M8 1V4M8 5L3 13M8 5L12 13" stroke="#202040" stroke-width="1.2" fill="none"/><circle cx="8" cy="5" r="1.3" fill="none" stroke="#000"/></svg>
<div class="t" style="left:243px;top:747px;color:#fff;font-size:12.8px;line-height:15px">Конфигур...</div>
<div class="a" style="left:323px;top:740px;width:105px;height:27px;border-radius:4px;border:1px solid #080808;box-shadow:inset 0 0 0 1px #5e5e5e,inset 0 1px 0 1px #8a8a8a;background:linear-gradient(#8e8e8e,#6a6a6a 25%,#4a4a4a 45%,#1c1c1c 46%,#181818)"></div>
<svg style="left:333px;top:746px" width="16" height="16"><rect x="0.5" y="0.5" width="15" height="15" rx="1" fill="#ffff00" stroke="#c00000"/><path d="M3 3.5L4.5 2.5V8" stroke="#e00000" stroke-width="1.6" fill="none" transform="translate(0.6,0.4)"/><path d="M3 3.5L4.5 2.5V8" stroke="#1f2fe0" stroke-width="1.6" fill="none"/><path d="M13 3H7.5V7H13.5" stroke="#e00000" stroke-width="1.6" fill="none" transform="translate(0.6,0.4)"/><path d="M13 3H7.5V7H13.5" stroke="#1f2fe0" stroke-width="1.6" fill="none"/><path d="M3.5 10L5 13.5L6.5 10" stroke="#b00000" stroke-width="1.2" fill="none"/><circle cx="10.5" cy="10.3" r="1.3" fill="none" stroke="#b00000" stroke-width="1.1"/><circle cx="10.5" cy="12.8" r="1.3" fill="none" stroke="#b00000" stroke-width="1.1"/></svg>
<div class="t" style="left:354px;top:747px;color:#fff;font-size:12px;line-height:15px">1С:Предп...</div>
<div class="a" style="left:433px;top:740px;width:103px;height:27px;border-radius:4px;border:1px solid #080808;box-shadow:inset 0 0 0 1px #5e5e5e,inset 0 1px 0 1px #8a8a8a;background:linear-gradient(#8e8e8e,#6a6a6a 25%,#4a4a4a 45%,#1c1c1c 46%,#181818)"></div>
<svg style="left:444px;top:746px" width="13" height="15"><ellipse cx="6" cy="7.5" rx="4" ry="6" fill="none" stroke="#d01818" stroke-width="3"/><ellipse cx="4.3" cy="5.5" rx="0.9" ry="3" fill="#f8a0a0" opacity=".8"/></svg>
<div class="t" style="left:459px;top:747px;color:#fff;font-size:12.7px;line-height:15px">В Контакт...</div>
<div class="a" style="left:541px;top:740px;width:103px;height:27px;border-radius:4px;border:1px solid #080808;box-shadow:inset 0 0 0 1px #5e5e5e,inset 0 1px 0 1px #8a8a8a;background:linear-gradient(#8e8e8e,#6a6a6a 25%,#4a4a4a 45%,#1c1c1c 46%,#181818)"></div>
<svg style="left:549px;top:745px" width="14" height="17"><path d="M1 2L6 0V14L1 16Z" fill="#e8c870"/><path d="M6 3H12V15H6" fill="#f0d890" stroke="#b89040" stroke-width="0.6"/><path d="M1 2L6 0V14L1 16Z" fill="none" stroke="#b89040" stroke-width="0.6"/></svg>
<div class="t" style="left:568px;top:747px;color:#fff;font-size:12.2px;line-height:15px">C:\Docum...</div>
<div class="a" style="left:648px;top:740px;width:105px;height:27px;border-radius:4px;border:1px solid #080808;box-shadow:inset 0 0 0 1px #5e5e5e,inset 0 1px 0 1px #8a8a8a;background:linear-gradient(#8e8e8e,#6a6a6a 25%,#4a4a4a 45%,#1c1c1c 46%,#181818)"></div>
<svg style="left:656px;top:745px" width="16" height="16"><rect x="0" y="0" width="16" height="16" fill="#0c1a80"/><rect x="1.5" y="1.5" width="13" height="3" fill="#fff"/><path d="M3 6L5 13.5L8 8L11 13.5L13 6" stroke="#fff" stroke-width="1.7" fill="none"/></svg>
<div class="t" style="left:675px;top:747px;color:#fff;font-size:12px;line-height:15px"><span style="color:#f0a040;font-weight:bold">3</span> Micros...</div>
<svg style="left:746px;top:752px" width="6" height="4"><path d="M0 0H6L3 3.5Z" fill="#fff"/></svg>
<div class="a" style="left:764px;top:746px;width:16px;height:16px;background:#3d8ed6"></div><div class="u" style="left:765px;top:747px;color:#fff">EN</div>
<svg style="left:814px;top:745px" width="13" height="16"><ellipse cx="6.5" cy="8" rx="4" ry="6.3" fill="none" stroke="#d01818" stroke-width="3.2"/><ellipse cx="5" cy="6" rx="1" ry="3" fill="#f07070" opacity=".7"/></svg>
<svg style="left:828px;top:744px" width="17" height="17"><rect x="5.5" y="0.5" width="11" height="8" fill="#08087a" stroke="#60c0ff"/><path d="M7 2.5H14" stroke="#c0d8ff"/><rect x="0.5" y="4.5" width="11" height="8" fill="#08087a" stroke="#60c0ff"/><path d="M2 6.5H9" stroke="#c0d8ff"/><path d="M2 15.5H9M5.5 13V15" stroke="#666"/></svg>
<svg style="left:848px;top:744px" width="15" height="17"><path d="M2 9L0 16L4 14L7 17L6 10ZM13 9L15 16L11 14L8 17L9 10Z" fill="#ddd"/><circle cx="7.5" cy="7" r="6" fill="#ddd"/><circle cx="7.5" cy="7" r="4.5" fill="#30a040"/><path d="M5 7L7 9L10.5 4.5" stroke="#fff" stroke-width="1.5" fill="none"/></svg>
<svg style="left:864px;top:744px" width="16" height="17"><path d="M0 6H3L8 1V16L3 11H0Z" fill="#e05030"/><path d="M10 4Q12 8.5 10 13M12 2Q15 8.5 12 15" stroke="#7a3010" stroke-width="1.5" fill="none"/></svg>
<svg style="left:883px;top:745px" width="15" height="16"><path d="M8 0.5L15 7.5L7 15.5L0.5 8.5Z" fill="#f4f4f4" stroke="#111" stroke-width="1.2"/><path d="M14 1L3 9.5H8L2 15L13 6.5H8.5Z" fill="#f8b020" stroke="#c06010" stroke-width=".5"/></svg>
<svg style="left:900px;top:747px" width="16" height="12"><path d="M0 6L4 1H16V11H4Z" fill="#76b900"/><ellipse cx="9" cy="6" rx="4" ry="2.5" fill="none" stroke="#d8f0a0" stroke-width="1.2"/></svg>
<svg style="left:918px;top:744px" width="16" height="17"><path d="M1 3Q8 0 15 1V10Q13 16 3 16Q1 12 1 3Z" fill="#e01818"/><circle cx="8" cy="8.5" r="5" fill="#fff"/><circle cx="8" cy="8.5" r="3.2" fill="#e05010"/><circle cx="8" cy="8.5" r="1.2" fill="#a01010"/></svg>
<svg style="left:937px;top:744px" width="16" height="17"><path d="M1 6H4L8 1V16L4 11H1Z" fill="#e8eef8" stroke="#607090" stroke-width="0.7"/><path d="M10.5 6Q11.5 8.5 10.5 11M12.5 4Q14.5 8.5 12.5 13" stroke="#40d060" stroke-width="1.4" fill="none"/></svg>
<svg style="left:954px;top:744px" width="17" height="17"><rect x="3" y="8" width="13" height="6" fill="#d8d8d8" stroke="#888" stroke-width="0.6"/><rect x="0" y="9" width="3" height="4" fill="#aaa"/><path d="M6 5H10V2L15 6L10 10V7H6Z" fill="#20c020"/></svg>
<div class="t" style="left:977px;top:746px;font-size:13px;line-height:15px;color:#fff">21:46</div>

</div>
</body></html>
